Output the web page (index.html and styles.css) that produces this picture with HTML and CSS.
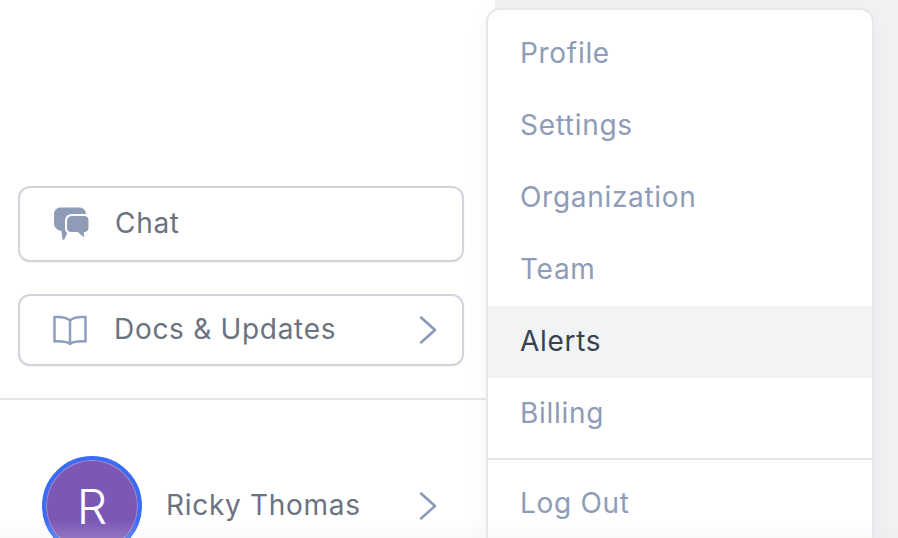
FILE: index.html
```html
<!doctype html>
<html lang="en">
  <head>
    <meta charset="UTF-8" />
    <title>Account menu</title>
    <link rel="stylesheet" href="styles.css">
  </head>
  <body>
    <aside class="sidebar">
      <a class="navButton chatButton">
        <svg class="navIcon" width="36" height="34" viewBox="0 0 36 34">
          <path class="chatBack" d="M7 .5h18c4 0 7 2.500 7 7v10c0 4-3 7-7 7H14l-4 8.500-1.500-.5-1-8.500C3 23 0 20 0 17V7.500C0 3 3 .5 7 .5z" />
          <path class="chatFront" d="M18 8h12c3.500 0 5.500 2 5.500 5.500v7c0 3-1.700 5-4.500 5.400l-.5 6.600-7-6.500h-6c-3.500 0-5.500-2-5.500-5V13.500C12.500 10 14.500 8 18 8z" />
        </svg>
        <span class="chatLabel">Chat</span>
      </a>
      <a class="navButton docsButton">
        <svg class="navIcon" width="36" height="32" viewBox="0 0 36 32" fill="none">
          <path class="bookLine" d="M18 6.500C15 3.500 10 2.500 2.500 3v24.500C10 27 15 28 18 30c3-2 8-3 15.500-2.500V3C26 2.500 21 3.500 18 6.500zm0 0V30" />
        </svg>
        <span class="docsLabel">Docs &amp; Updates</span>
        <svg class="chevron" width="18" height="28" viewBox="0 0 18 28" fill="none"><path d="M2 1.500 16 14 2 26.500" /></svg>
      </a>
      <hr class="sideRule" />
      <div class="userRow">
        <div class="avatar">R</div>
        <span class="userName">Ricky Thomas</span>
        <svg class="chevron" width="18" height="28" viewBox="0 0 18 28" fill="none"><path d="M2 1.500 16 14 2 26.500" /></svg>
      </div>
    </aside>

    <!-- Account dropdown, sits over the sidebar edge -->
    <nav class="accountMenu">
      <div class="menuGroup">
        <a class="menuItem">Profile</a>
        <a class="menuItem">Settings</a>
        <a class="menuItem">Organization</a>
        <a class="menuItem">Team</a>
        <a class="menuItem active">Alerts</a>
        <a class="menuItem">Billing</a>
      </div>
      <div class="menuGroup">
        <a class="menuItem">Log Out</a>
      </div>
    </nav>

    <div class="bottomFade"></div>
  </body>
</html>
```

FILE: styles.css
```css
/* Base Reset & Styles */
* {
  box-sizing: border-box;
  margin: 0;
  padding: 0;
}
body {
  font-family: Inter, "Open Sans", sans-serif;
  background-color: #f1f2f4;
  color: #6b7280;
  width: 898px;
  height: 538px;
  overflow: hidden;
  position: relative;
}
.sidebar {
  width: 496px;
  height: 538px;
  overflow: hidden;
  padding-top: 186px;
  background-color: #fff;
  display: flex;
  flex-direction: column;
  align-items: flex-start;
  border-right: 1px solid #f0f0f2;
}
.navButton {
  width: 446px;
  flex-shrink: 0;
  margin-left: 18px;
  border: 2px solid #d1d5db;
  border-radius: 12px;
  display: flex;
  align-items: center;
  font-size: 28px;
  letter-spacing: 0.7px;
  background-color: #fff;
  box-shadow: 0 1px 2px rgba(0, 0, 0, 0.05);
}
.chatButton {
  height: 76px;
  padding-left: 34px;
}
.docsButton {
  height: 72px;
  margin-top: 32px;
  padding-left: 32px;
  padding-right: 25px;
}
.chatLabel {
  margin-left: 25px;
  padding-bottom: 2px;
}
.docsLabel {
  margin-left: 26px;
  padding-bottom: 2px;
  flex: 1;
}
.chatBack,
.chatFront {
  fill: #8e9cb8;
}
.chatFront {
  stroke: #fff;
  stroke-width: 2;
}
.bookLine {
  stroke: #8e9fbd;
  stroke-width: 2.500;
  stroke-linejoin: round;
}
.chevron path {
  stroke: #8798b8;
  stroke-width: 2.500;
  stroke-linecap: round;
  stroke-linejoin: round;
}
.sideRule {
  width: 488px;
  height: 2px;
  flex-shrink: 0;
  margin-top: 32px;
  border: none;
  background-color: #e5e5ea;
}
.userRow {
  width: 488px;
  flex-shrink: 0;
  margin-top: 56px;
  padding: 0 51px 0 42px;
  display: flex;
  align-items: center;
}
.avatar {
  width: 100px;
  height: 100px;
  flex-shrink: 0;
  border-radius: 50%;
  border: 4px solid #3b6cf6;
  background-color: #7b58b6;
  box-shadow: inset 0 0 0 1px #a38fd0;
  color: #fff;
  font-size: 48px;
  font-weight: 300;
  display: flex;
  align-items: center;
  justify-content: center;
}
.userName {
  margin-left: 24px;
  padding-bottom: 2px;
  font-size: 28px;
  letter-spacing: 0.7px;
  flex: 1;
}

/* Dropdown */
.accountMenu {
  position: absolute;
  top: 10px;
  left: 488px;
  width: 384px;
  height: 560px;
  background-color: #fff;
  border-radius: 12px;
  box-shadow: 0 0 0 2px #e6e7ea, 0 6px 24px rgba(0, 0, 0, 0.05);
}
.menuGroup {
  padding: 8px 0;
}
.menuGroup + .menuGroup {
  border-top: 2px solid #e5e5ea;
}
.menuItem {
  height: 72px;
  padding-left: 32px;
  padding-bottom: 2px;
  display: flex;
  align-items: center;
  font-size: 28px;
  letter-spacing: 0.7px;
  color: #8e9cb8;
}
.menuItem.active {
  background-color: #f2f3f5;
  color: #374151;
}
.bottomFade {
  position: absolute;
  left: 0;
  right: 0;
  bottom: 0;
  height: 18px;
  background: linear-gradient(rgba(230, 230, 230, 0), rgba(230, 230, 230, 0.2));
}
```
